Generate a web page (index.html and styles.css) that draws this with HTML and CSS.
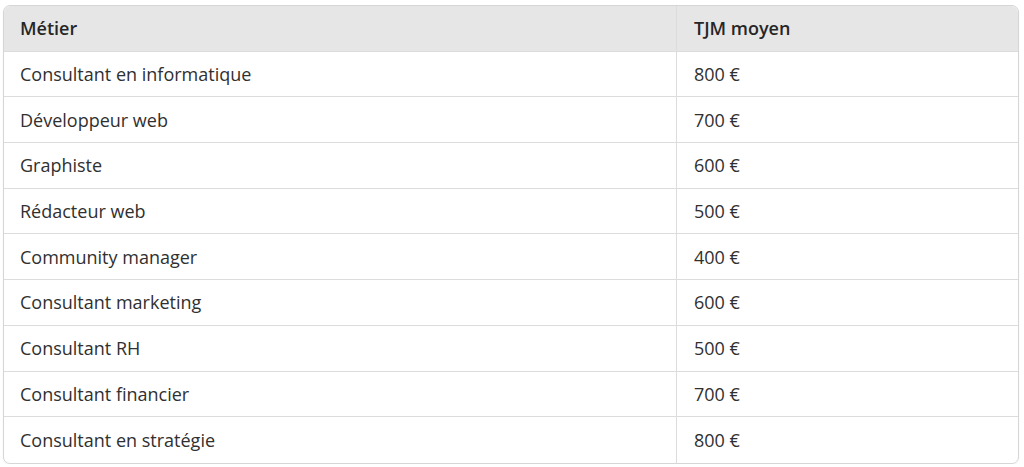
FILE: index.html
```html
<!DOCTYPE html>
<html lang="fr">
<head>
<meta charset="utf-8">
<link rel="stylesheet" href="styles.css">
</head>
<body>
<div class="wrap">
<table class="tbl">
<thead>
<tr><th class="c1">Métier</th><th class="c2">TJM moyen</th></tr>
</thead>
<tbody>
<tr><td>Consultant en informatique</td><td>800 €</td></tr>
<tr><td>Développeur web</td><td>700 €</td></tr>
<tr><td>Graphiste</td><td>600 €</td></tr>
<tr><td>Rédacteur web</td><td>500 €</td></tr>
<tr><td>Community manager</td><td>400 €</td></tr>
<tr><td>Consultant marketing</td><td>600 €</td></tr>
<tr><td>Consultant RH</td><td>500 €</td></tr>
<tr><td>Consultant financier</td><td>700 €</td></tr>
<tr><td>Consultant en stratégie</td><td>800 €</td></tr>
</tbody>
</table>
</div>
</body>
</html>
```
FILE: styles.css
```css
html, body {
  margin: 0;
  padding: 0;
  background: #ffffff;
}
body {
  font-family: "Open Sans", "Noto Sans", "Liberation Sans", sans-serif;
  color: #303030;
}
.wrap {
  padding: 5px 5px 0 3px;
}
.tbl {
  width: 1016px;
  border-collapse: separate;
  border-spacing: 0;
  border: 1px solid #d6d6d6;
  border-radius: 7px;
  overflow: hidden;
  font-size: 18px;
  box-shadow: 0 1px 2px rgba(0,0,0,0.06);
}
.tbl th, .tbl td {
  text-align: left;
  height: 45.7px;
  padding: 0 16px 0 16px;
  box-sizing: border-box;
  vertical-align: middle;
  border-bottom: 1px solid #dcdcdc;
}
.tbl th + th, .tbl td + td {
  padding-left: 17px;
}
.tbl th {
  background: #e6e6e6;
  font-weight: 600;
  color: #262626;
}
.tbl th:first-child, .tbl td:first-child {
  width: 673px;
  border-right: 1px solid #dcdcdc;
}
.tbl tbody tr:last-child td {
  border-bottom: none;
}
```
